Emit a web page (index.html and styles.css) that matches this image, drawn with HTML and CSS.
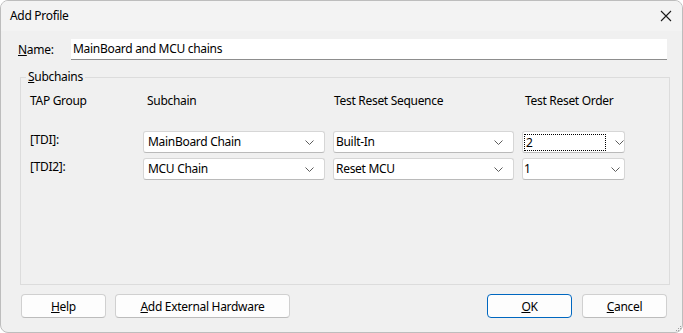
FILE: index.html
```html
<html>
  <head>
    <title>Add Profile</title>
    <link rel="stylesheet" href="styles.css">
  </head>
  <body>
    <div class="window">
      <div class="titlebar">
        <span class="title">Add Profile</span>
        <svg class="close" width="12" height="12" viewBox="0 0 12 12">
          <path d="M1 1 L11 11 M11 1 L1 11" stroke="#1b1b1b" stroke-width="1.1" fill="none"/>
        </svg>
      </div>

      <div class="content">
        <div class="name-row">
          <span class="name-label"><u>N</u>ame:</span>
          <div class="textbox">MainBoard and MCU chains</div>
        </div>

        <fieldset class="group">
          <legend><u>S</u>ubchains</legend>
          <div class="chains">
            <div class="hdr">TAP Group</div>
            <div class="hdr hdr-sub">Subchain</div>
            <div class="hdr hdr-seq">Test Reset Sequence</div>
            <div class="hdr hdr-ord">Test Reset Order</div>

            <div class="tap">[TDI]:</div>
            <div class="combo"><span class="val">MainBoard Chain</span><svg class="chev" width="9" height="5" viewBox="0 0 9 5"><path d="M0.5 0.5 L4.5 4.5 L8.5 0.5" stroke="#5c5c5c" fill="none"/></svg></div>
            <div class="combo combo-seq"><span class="val">Built-In</span><svg class="chev" width="9" height="5" viewBox="0 0 9 5"><path d="M0.5 0.5 L4.5 4.5 L8.5 0.5" stroke="#5c5c5c" fill="none"/></svg></div>
            <div class="combo combo-ord"><span class="val focus">2</span><svg class="chev" width="9" height="5" viewBox="0 0 9 5"><path d="M0.5 0.5 L4.5 4.5 L8.5 0.5" stroke="#5c5c5c" fill="none"/></svg></div>

            <div class="tap">[TDI2]:</div>
            <div class="combo"><span class="val">MCU Chain</span><svg class="chev" width="9" height="5" viewBox="0 0 9 5"><path d="M0.5 0.5 L4.5 4.5 L8.5 0.5" stroke="#5c5c5c" fill="none"/></svg></div>
            <div class="combo combo-seq"><span class="val">Reset MCU</span><svg class="chev" width="9" height="5" viewBox="0 0 9 5"><path d="M0.5 0.5 L4.5 4.5 L8.5 0.5" stroke="#5c5c5c" fill="none"/></svg></div>
            <div class="combo combo-ord"><span class="val">1</span><svg class="chev" width="9" height="5" viewBox="0 0 9 5"><path d="M0.5 0.5 L4.5 4.5 L8.5 0.5" stroke="#5c5c5c" fill="none"/></svg></div>
          </div>
        </fieldset>

        <div class="buttons">
          <button class="btn btn-help"><u>H</u>elp</button>
          <button class="btn btn-ext"><u>A</u>dd External Hardware</button>
          <span class="spacer"></span>
          <button class="btn btn-ok"><u>O</u>K</button>
          <button class="btn"><u>C</u>ancel</button>
        </div>
      </div>

      <svg class="grip" width="7" height="7" viewBox="0 0 7 7">
        <rect x="5" y="1" width="1" height="1" fill="#a0a0a0"/>
        <rect x="3" y="3" width="1" height="1" fill="#a0a0a0"/>
        <rect x="5" y="3" width="1" height="1" fill="#a0a0a0"/>
        <rect x="1" y="5" width="1" height="1" fill="#a0a0a0"/>
        <rect x="3" y="5" width="1" height="1" fill="#a0a0a0"/>
        <rect x="5" y="5" width="1" height="1" fill="#a0a0a0"/>
      </svg>
    </div>
  </body>
</html>
```

FILE: styles.css
```css
html, body {
  margin: 0;
  background: #ffffff;
}

body {
  font-family: "Noto Sans", "Open Sans", sans-serif;
  font-size: 12px;
  letter-spacing: -0.3px;
  color: #000;
}

.window {
  position: relative;
  box-sizing: border-box;
  width: 683px;
  height: 333px;
  border: 1px solid #bdbdbd;
  border-radius: 8px;
  background: #f0f0f0;
  overflow: hidden;
}

.titlebar {
  height: 30px;
  display: flex;
  align-items: center;
  padding: 0 10px 0 9px;
  background: #f3f3f3;
}

.title {
  flex: 1;
  line-height: 16px;
  margin-top: -1px;
}

.content {
  padding: 8px 15px 0 17px;
}

.name-row {
  display: flex;
  align-items: center;
  height: 21px;
}

.name-label {
  width: 53px;
}

.textbox {
  flex: 1;
  box-sizing: border-box;
  height: 21px;
  line-height: 19px;
  padding: 0 2px;
  background: #fff;
  border-bottom: 1px solid #8d8d8d;
}

.group {
  box-sizing: border-box;
  height: 216px;
  margin: 9px -3px 0 2px;
  padding: 8px 0 0 9px;
  border: 1px solid #dcdcdc;
  min-width: 0;
}

.group legend {
  margin-left: -4px;
  padding: 0 2px;
  line-height: 16px;
}

.chains {
  display: grid;
  grid-template-columns: 105px 182px 181px 103px;
  column-gap: 8px;
  row-gap: 5px;
}

.hdr {
  line-height: 16px;
  margin-bottom: 17px;
}

.hdr-sub {
  padding-left: 4px;
}

.hdr-seq {
  padding-left: 1px;
}

.hdr-ord {
  padding-left: 3px;
}

.tap {
  line-height: 16px;
  padding-top: 1px;
}

.combo {
  box-sizing: border-box;
  height: 22px;
  display: flex;
  align-items: center;
  padding: 0 10px 0 4px;
  background: #fff;
  border: 1px solid #d6d6d6;
  border-bottom-color: #bababa;
  border-radius: 3px;
}

.combo-seq {
  padding-left: 2px;
}

.combo-ord {
  padding-left: 1px;
  padding-right: 4px;
}

.val {
  flex: 1;
  line-height: 16px;
}

.focus {
  box-sizing: border-box;
  flex: none;
  width: 82px;
  height: 17px;
  margin-right: 9px;
  border: 1px dotted #000;
  line-height: 15px;
  padding-left: 1px;
}

.chev {
  flex: none;
}

.buttons {
  display: flex;
  gap: 9px;
  margin-top: 9px;
  padding-left: 3px;
}

.spacer {
  flex: 1;
}

.btn {
  box-sizing: border-box;
  width: 85px;
  height: 24px;
  padding: 0;
  font-family: inherit;
  font-size: 12px;
  letter-spacing: inherit;
  color: #000;
  background: #fdfdfd;
  border: 1px solid #d0d0d0;
  border-bottom-color: #bcbcbc;
  border-radius: 4px;
}

.btn-ext {
  width: 175px;
}

.btn-ok {
  border: 1px solid #0067c0;
  margin-right: 1px;
}

.grip {
  position: absolute;
  right: 0;
  bottom: 0;
}
```
